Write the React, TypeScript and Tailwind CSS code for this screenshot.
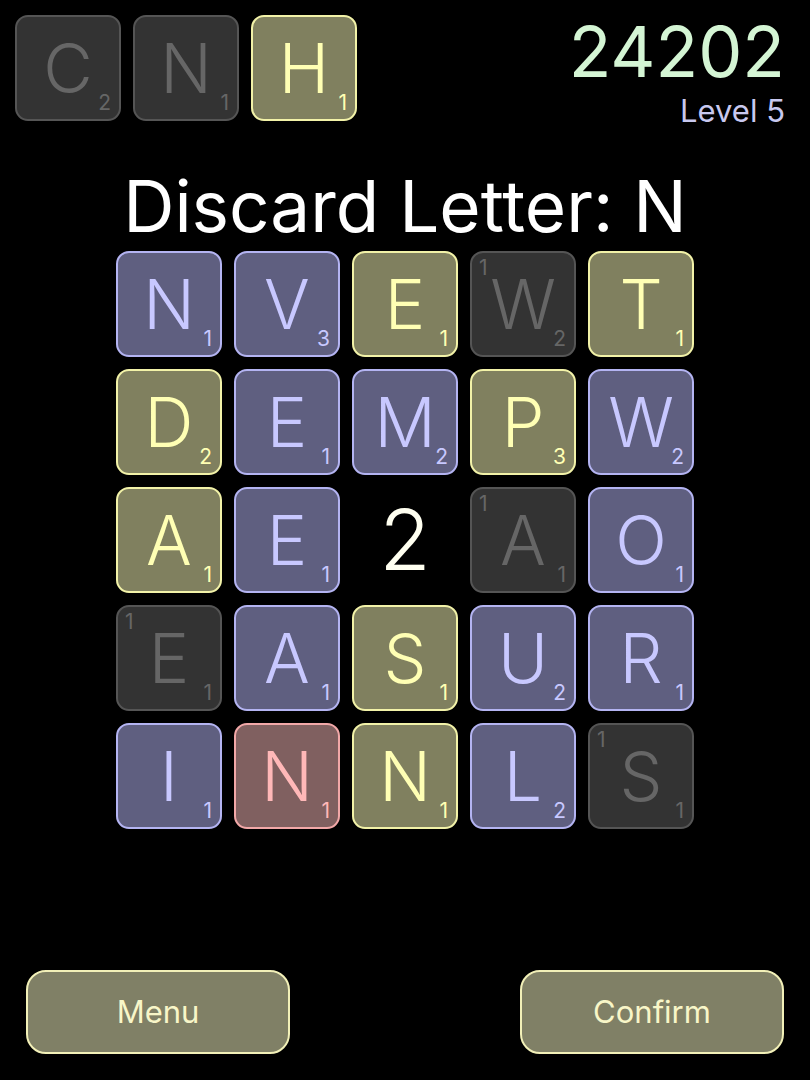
import React from 'react';

type Tone = 'purple' | 'yellow' | 'gray' | 'red';

type Cell = { letter: string; value: number; tone: Tone; corner?: number } | { bonus: string };

const toneStyles: Record<Tone, string> = {
  purple: 'bg-[#5f5f80] border-[#b4b4f2] text-[#c8c8ff]',
  yellow: 'bg-[#80805f] border-[#f2f2a8] text-[#ffffb4]',
  gray: 'bg-[#333333] border-[#555555] text-[#666666]',
  red: 'bg-[#806060] border-[#f2a8a8] text-[#ffb8b8]',
};

const board: Cell[][] = [
  [
    { letter: 'N', value: 1, tone: 'purple' },
    { letter: 'V', value: 3, tone: 'purple' },
    { letter: 'E', value: 1, tone: 'yellow' },
    { letter: 'W', value: 2, tone: 'gray', corner: 1 },
    { letter: 'T', value: 1, tone: 'yellow' },
  ],
  [
    { letter: 'D', value: 2, tone: 'yellow' },
    { letter: 'E', value: 1, tone: 'purple' },
    { letter: 'M', value: 2, tone: 'purple' },
    { letter: 'P', value: 3, tone: 'yellow' },
    { letter: 'W', value: 2, tone: 'purple' },
  ],
  [
    { letter: 'A', value: 1, tone: 'yellow' },
    { letter: 'E', value: 1, tone: 'purple' },
    { bonus: '2' },
    { letter: 'A', value: 1, tone: 'gray', corner: 1 },
    { letter: 'O', value: 1, tone: 'purple' },
  ],
  [
    { letter: 'E', value: 1, tone: 'gray', corner: 1 },
    { letter: 'A', value: 1, tone: 'purple' },
    { letter: 'S', value: 1, tone: 'yellow' },
    { letter: 'U', value: 2, tone: 'purple' },
    { letter: 'R', value: 1, tone: 'purple' },
  ],
  [
    { letter: 'I', value: 1, tone: 'purple' },
    { letter: 'N', value: 1, tone: 'red' },
    { letter: 'N', value: 1, tone: 'yellow' },
    { letter: 'L', value: 2, tone: 'purple' },
    { letter: 'S', value: 1, tone: 'gray', corner: 1 },
  ],
];

const hand: { letter: string; value: number; tone: Tone }[] = [
  { letter: 'C', value: 2, tone: 'gray' },
  { letter: 'N', value: 1, tone: 'gray' },
  { letter: 'H', value: 1, tone: 'yellow' },
];

function Tile({ letter, value, tone, corner }: { letter: string; value: number; tone: Tone; corner?: number }) {
  return (
    <div
      className={`relative w-[106px] h-[106px] rounded-[13px] border-2 flex items-center justify-center ${toneStyles[tone]}`}
    >
      <span className="text-[68px] leading-[50px] font-light">{letter}</span>
      {corner !== undefined && (
        <span className="absolute left-[7px] top-[4px] text-[21px] leading-none">{corner}</span>
      )}
      <span className="absolute right-[8px] bottom-[6px] text-[21px] leading-none">{value}</span>
    </div>
  );
}

export default function App() {
  return (
    <div
      className="w-[810px] h-[1080px] bg-black flex flex-col overflow-hidden"
      style={{ fontFamily: 'Inter, "Noto Sans", sans-serif' }}
    >
      {/* Hand + score */}
      <div className="flex justify-between px-[15px] pt-[15px]">
        <div className="flex gap-[12px]">
          {hand.map((t, i) => (
            <Tile key={i} {...t} />
          ))}
        </div>
        <div className="h-[106px] flex flex-col items-end pr-[10px] pt-[4px]">
          <span className="text-[70px] leading-[66px] text-[#d4f5d4]">24202</span>
          <span className="text-[31px] leading-[30px] mt-[11px] text-[#c8c8ef]">Level 5</span>
        </div>
      </div>

      {/* Prompt */}
      <div className="h-[130px] flex items-center justify-center">
        <h1 className="text-[71px] leading-none text-white mt-[40px]">Discard Letter: N</h1>
      </div>

      {/* Board */}
      <div className="flex flex-col items-center gap-[12px]">
        {board.map((row, r) => (
          <div key={r} className="flex gap-[12px]">
            {row.map((cell, c) =>
              'bonus' in cell ? (
                <div key={c} className="w-[106px] h-[106px] flex items-center justify-center">
                  <span className="text-[84px] leading-[62px] font-light text-[#fffff0]">{cell.bonus}</span>
                </div>
              ) : (
                <Tile key={c} {...cell} />
              )
            )}
          </div>
        ))}
      </div>

      {/* Actions */}
      <div className="mt-auto flex justify-between px-[26px] pb-[26px]">
        <button className="w-[264px] h-[84px] rounded-[20px] border-2 border-[#f2f0b8] bg-[#808066] text-[#f8f6c8] text-[31px]">
          Menu
        </button>
        <button className="w-[264px] h-[84px] rounded-[20px] border-2 border-[#f2f0b8] bg-[#808066] text-[#f8f6c8] text-[31px]">
          Confirm
        </button>
      </div>
    </div>
  );
}
